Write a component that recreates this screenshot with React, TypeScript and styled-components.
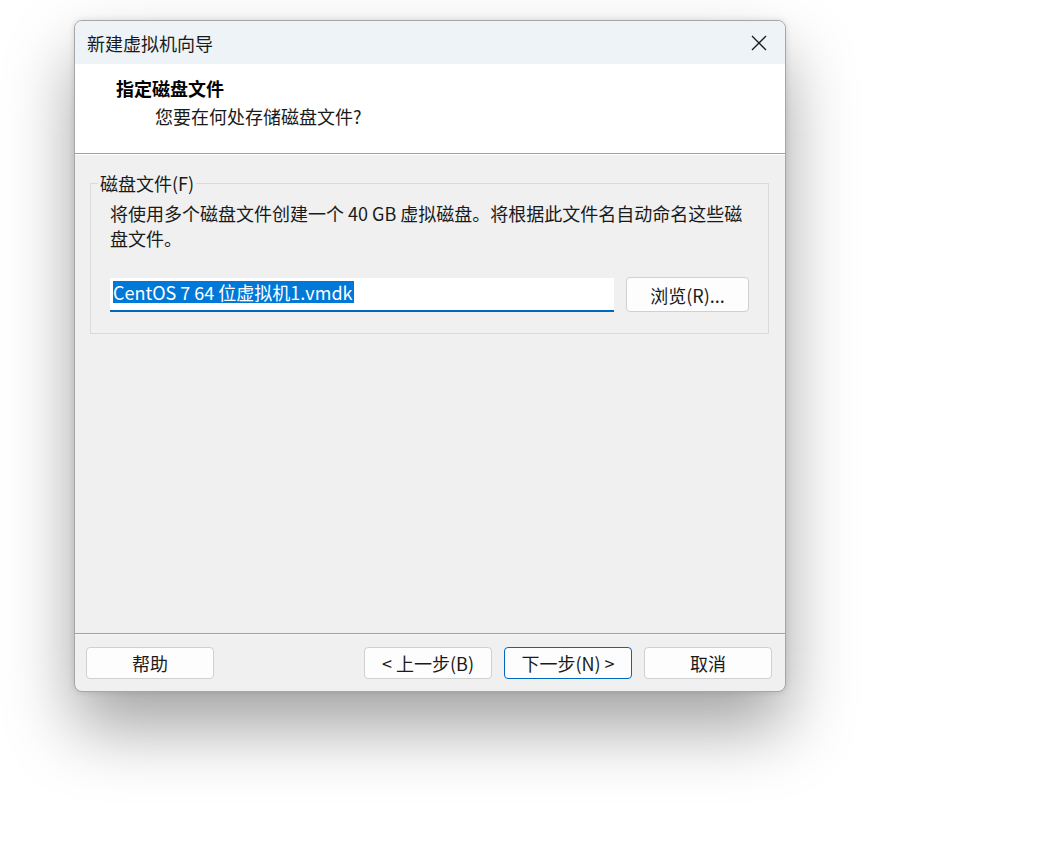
import React from "react";
import styled, { createGlobalStyle } from "styled-components";

const GlobalStyle = createGlobalStyle`
  html, body { margin: 0; padding: 0; background: #ffffff; }
  body { font-family: "Noto Sans CJK SC", "Noto Sans", sans-serif; color: #1a1a1a; }
`;

const Page = styled.div`
  width: 1053px;
  height: 849px;
  padding: 20px 0 0 74px;
  box-sizing: border-box;
`;

const Dialog = styled.div`
  width: 712px;
  height: 672px;
  box-sizing: border-box;
  border: 1px solid #a6a6a6;
  border-radius: 8px;
  overflow: hidden;
  background: #f0f0f0;
  display: flex;
  flex-direction: column;
  box-shadow: 0 36px 68px rgba(0, 0, 0, 0.36), 0 0 6px rgba(0, 0, 0, 0.12);
`;

const TitleBar = styled.div`
  height: 43px;
  flex: none;
  background: #edf3f6;
  display: flex;
  align-items: center;
  justify-content: space-between;
  padding-left: 12px;
`;

const TitleText = styled.span`
  font-size: 18px;
  line-height: 24px;
  color: #1a1a1a;
`;

const CloseButton = styled.button`
  width: 46px;
  height: 43px;
  border: none;
  background: transparent;
  display: flex;
  align-items: center;
  justify-content: center;
  padding: 0;
  margin-right: 3px;
  cursor: default;
`;

const Header = styled.div`
  height: 90px;
  flex: none;
  background: #ffffff;
  box-sizing: border-box;
  padding: 12px 0 0 41px;
  border-bottom: 1px solid #a0a0a0;
`;

const HeaderTitle = styled.div`
  font-size: 18px;
  font-weight: 700;
  line-height: 24px;
  color: #000;
`;

const HeaderSub = styled.div`
  font-size: 18px;
  line-height: 24px;
  margin-top: 4px;
  padding-left: 39px;
  color: #1a1a1a;
`;

const Separator = styled.div`
  height: 1px;
  flex: none;
  background: #ffffff;
`;

const Body = styled.div`
  flex: 1;
  padding: 17px 16px 0 15px;
  box-sizing: border-box;
`;

const Group = styled.fieldset`
  margin: 0;
  padding: 7px 18px 21px 19px;
  border: 1px solid #dadada;
  min-width: 0;
`;

const Legend = styled.legend`
  font-size: 18px;
  line-height: 22px;
  padding: 0 2px;
  margin-left: -12px;
  color: #1a1a1a;
`;

const Description = styled.p`
  margin: 0;
  font-size: 18px;
  line-height: 25px;
  color: #1a1a1a;
`;

const FileRow = styled.div`
  display: flex;
  align-items: center;
  gap: 12px;
  margin-top: 26px;
`;

const FileInput = styled.div`
  flex: none;
  width: 504px;
  height: 34px;
  box-sizing: border-box;
  background: #ffffff;
  border-bottom: 2px solid #0067c0;
  padding: 3px 3px 0 3px;
  display: flex;
  align-items: flex-start;
`;

const Selected = styled.span`
  background: #0078d7;
  color: #ffffff;
  font-size: 18px;
  line-height: 22px;
  padding-right: 1px;
  white-space: pre;
`;

const Button = styled.button<{ $primary?: boolean }>`
  width: 128px;
  height: 32px;
  box-sizing: border-box;
  background: #fdfdfd;
  border: 1px solid ${(p) => (p.$primary ? "#0067c0" : "#d0d0d0")};
  border-radius: 4px;
  font-family: "Noto Sans CJK SC", "Noto Sans", sans-serif;
  font-size: 18px;
  line-height: 22px;
  color: #1a1a1a;
  padding: 0;
  flex: none;
  cursor: default;
`;

const BrowseButton = styled(Button)`
  width: 123px;
  height: 35px;
`;

const FooterLine = styled.div`
  height: 1px;
  flex: none;
  background: #a0a0a0;
`;

const Footer = styled.div`
  height: 57px;
  flex: none;
  box-sizing: border-box;
  display: flex;
  align-items: flex-start;
  padding: 12px 13px 0 11px;
  border-top: 1px solid #f7f7f7;
`;

const NavGroup = styled.div`
  margin-left: auto;
  display: flex;
  gap: 12px;
`;

export default function App() {
  return (
    <Page>
      <GlobalStyle />
      <Dialog>
        <TitleBar>
          <TitleText>新建虚拟机向导</TitleText>
          <CloseButton aria-label="关闭">
            <svg width="16" height="16" viewBox="0 0 16 16">
              <path d="M1 1 L15 15 M15 1 L1 15" stroke="#1a1a1a" strokeWidth="1.3" fill="none" />
            </svg>
          </CloseButton>
        </TitleBar>
        <Header>
          <HeaderTitle>指定磁盘文件</HeaderTitle>
          <HeaderSub>您要在何处存储磁盘文件?</HeaderSub>
        </Header>
        <Separator />
        <Body>
          <Group>
            <Legend>磁盘文件(F)</Legend>
            <Description>
              将使用多个磁盘文件创建一个 40 GB 虚拟磁盘。将根据此文件名自动命名这些磁盘文件。
            </Description>
            <FileRow>
              <FileInput>
                <Selected>CentOS 7 64 位虚拟机1.vmdk</Selected>
              </FileInput>
              <BrowseButton>浏览(R)...</BrowseButton>
            </FileRow>
          </Group>
        </Body>
        <FooterLine />
        <Footer>
          <Button>帮助</Button>
          <NavGroup>
            <Button>&lt; 上一步(B)</Button>
            <Button $primary>下一步(N) &gt;</Button>
            <Button>取消</Button>
          </NavGroup>
        </Footer>
      </Dialog>
    </Page>
  );
}
